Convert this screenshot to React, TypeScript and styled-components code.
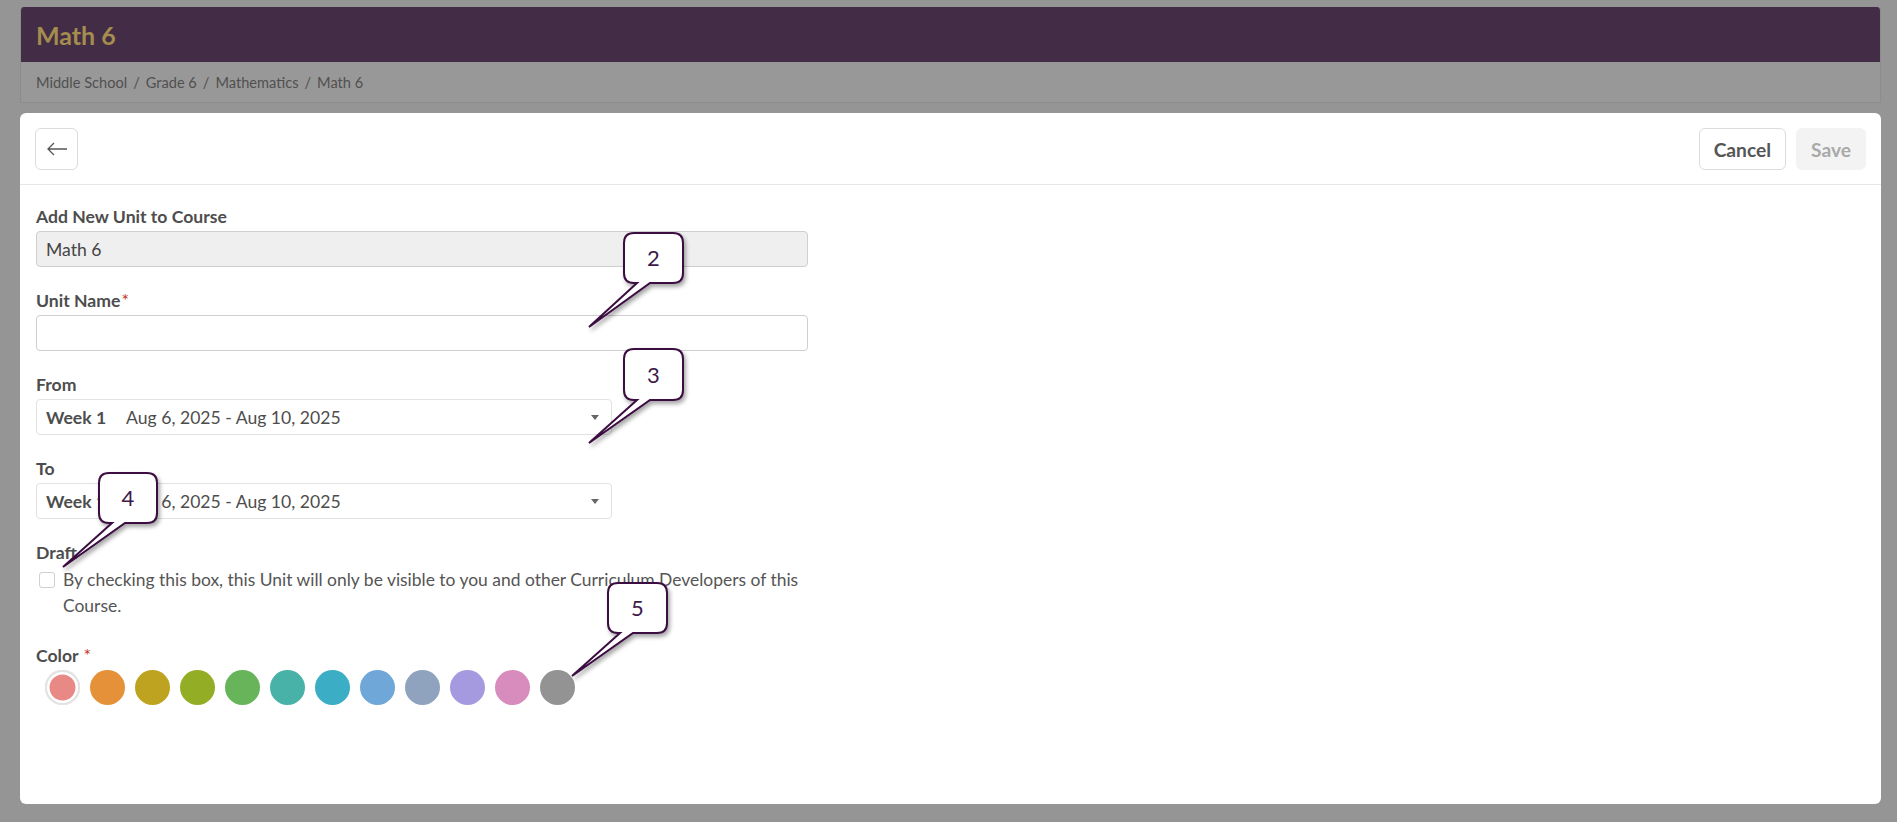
import React from 'react';
import styled, { createGlobalStyle } from 'styled-components';

const GlobalStyle = createGlobalStyle`
  html, body {
    margin: 0;
    padding: 0;
    background: #959595;
    font-family: Lato, 'Open Sans', sans-serif;
  }
  * {
    box-sizing: border-box;
  }
`;

const Page = styled.div`
  position: relative;
  padding: 7px 16px 18px 20px;
  display: flex;
  flex-direction: column;
  gap: 10px;
`;

const CourseHeader = styled.header`
  border-radius: 4px 4px 2px 2px;
  overflow: hidden;
  border: 1px solid #8c8c8c;
  border-top: none;
`;

const TitleBar = styled.div`
  height: 55px;
  background: #432c45;
  display: flex;
  align-items: center;
  padding: 0 15px;
`;

const Title = styled.h1`
  margin: 0;
  font-size: 25px;
  font-weight: 700;
  color: #a48d4e;
`;

const Breadcrumbs = styled.nav`
  height: 40px;
  background: #989898;
  display: flex;
  align-items: center;
  padding: 0 15px;
  font-size: 14.6px;
  color: #505050;
  gap: 6px;
`;

const Card = styled.main`
  background: #fff;
  border-radius: 6px;
  height: 691px;
  display: flex;
  flex-direction: column;
`;

const Toolbar = styled.div`
  display: flex;
  align-items: center;
  justify-content: space-between;
  padding: 15px 15px 14px 15px;
  border-bottom: 1px solid #e6e6e6;
`;

const Actions = styled.div`
  display: flex;
  gap: 10px;
`;

const Button = styled.button<{ $disabled?: boolean }>`
  height: 42px;
  padding: 0 14px;
  border-radius: 6px;
  border: 1px solid ${({ $disabled }) => ($disabled ? '#f3f3f3' : '#dcdcdc')};
  background: ${({ $disabled }) => ($disabled ? '#f3f3f3' : '#fff')};
  color: ${({ $disabled }) => ($disabled ? '#a9a9a9' : '#555')};
  font-family: Lato, sans-serif;
  font-size: 19.2px;
  font-weight: 700;
  display: flex;
  align-items: center;
  justify-content: center;
`;

const IconButton = styled(Button)`
  width: 43px;
  padding: 0;
`;

const Form = styled.form`
  padding: 21px 16px 0 16px;
  display: flex;
  flex-direction: column;
  gap: 23px;
`;

const Field = styled.div<{ $width: number }>`
  display: flex;
  flex-direction: column;
  gap: 4px;
  width: ${({ $width }) => $width}px;
`;

const Label = styled.label`
  font-size: 17.6px;
  font-weight: 700;
  color: #4d4d4d;
  line-height: 21px;
`;

const Required = styled.span`
  color: #c0392b;
  font-weight: 400;
  margin-left: 1px;
`;

const TextInput = styled.div<{ $readOnly?: boolean }>`
  height: 36px;
  border: 1px solid #cfcfcf;
  border-radius: 4px;
  background: ${({ $readOnly }) => ($readOnly ? '#efefef' : '#fff')};
  display: flex;
  align-items: center;
  padding: 0 9px;
  font-size: 17.6px;
  color: #454545;
`;

const Select = styled.div`
  height: 36px;
  border: 1px solid #e2e2e2;
  border-radius: 4px;
  display: flex;
  align-items: center;
  padding: 0 12px 0 9px;
  font-size: 17.6px;
  color: #4d4d4d;
`;

const WeekName = styled.span`
  font-weight: 700;
  margin-right: 20px;
`;

const Caret = styled.span`
  margin-left: auto;
  width: 0;
  height: 0;
  border-left: 4.5px solid transparent;
  border-right: 4.5px solid transparent;
  border-top: 5px solid #666;
`;

const CheckRow = styled.div`
  display: flex;
  align-items: flex-start;
  gap: 8px;
  padding: 0 0 3px 3px;
`;

const Checkbox = styled.span`
  flex: none;
  width: 16px;
  height: 16px;
  margin-top: 5px;
  border: 1px solid #d0d0d0;
  border-radius: 3px;
  background: #fff;
`;

const CheckText = styled.span`
  font-size: 17.45px;
  line-height: 26px;
  color: #555;
`;

const Swatches = styled.div`
  display: flex;
  gap: 10px;
  padding-left: 9px;
`;

const Swatch = styled.span<{ $color: string; $selected?: boolean }>`
  width: 35px;
  height: 35px;
  border-radius: 50%;
  background: ${({ $color }) => $color};
  box-shadow: ${({ $selected }) =>
    $selected ? 'inset 0 0 0 2px #e2e2e2, inset 0 0 0 4.5px #fff' : 'none'};
`;

const CalloutLayer = styled.svg`
  position: absolute;
  left: 0;
  top: 0;
  pointer-events: none;
  overflow: visible;
`;

const swatches = [
  '#e98985',
  '#e5913a',
  '#bda31f',
  '#93ad24',
  '#67b45a',
  '#49b2a8',
  '#3badc4',
  '#6fa7d8',
  '#8fa3bf',
  '#a59ae0',
  '#d88bbd',
  '#939393',
];

interface CalloutProps {
  n: number;
  x0: number;
  y0: number;
  x1: number;
  y1: number;
  b1: number;
  b2: number;
  tx: number;
  ty: number;
}

// numbered speech-bubble annotation drawn over the form
const Callout: React.FC<CalloutProps> = ({ n, x0, y0, x1, y1, b1, b2, tx, ty }) => {
  const r = 10;
  const d = `M${x0 + r},${y0} H${x1 - r} Q${x1},${y0} ${x1},${y0 + r} V${y1 - r} Q${x1},${y1} ${x1 - r},${y1} H${b2} L${tx},${ty} L${b1},${y1} H${x0 + r} Q${x0},${y1} ${x0},${y1 - r} V${y0 + r} Q${x0},${y0} ${x0 + r},${y0} Z`;
  return (
    <g>
      <path d={d} fill="#fff" stroke="#3a0b3f" strokeWidth={2} filter="url(#cshadow)" />
      <text
        x={(x0 + x1) / 2}
        y={(y0 + y1) / 2 + 8}
        textAnchor="middle"
        fontFamily="Lato, sans-serif"
        fontSize={22}
        fill="#3d1a4a"
      >
        {n}
      </text>
    </g>
  );
};

const App: React.FC = () => {
  return (
    <>
      <GlobalStyle />
      <Page>
        <CourseHeader>
          <TitleBar>
            <Title>Math 6</Title>
          </TitleBar>
          <Breadcrumbs>
            <span>Middle School</span>
            <span>/</span>
            <span>Grade 6</span>
            <span>/</span>
            <span>Mathematics</span>
            <span>/</span>
            <span>Math 6</span>
          </Breadcrumbs>
        </CourseHeader>

        <Card>
          <Toolbar>
            <IconButton type="button" aria-label="Back">
              <svg width="22" height="14" viewBox="0 0 22 14" fill="none">
                <path d="M21 7H2M8 1L2 7l6 6" stroke="#555" strokeWidth="1.3" />
              </svg>
            </IconButton>
            <Actions>
              <Button type="button">Cancel</Button>
              <Button type="button" $disabled>
                Save
              </Button>
            </Actions>
          </Toolbar>

          <Form>
            <Field $width={772}>
              <Label>Add New Unit to Course</Label>
              <TextInput $readOnly>Math 6</TextInput>
            </Field>
            <Field $width={772}>
              <Label>
                Unit Name<Required>*</Required>
              </Label>
              <TextInput />
            </Field>
            <Field $width={576}>
              <Label>From</Label>
              <Select>
                <WeekName>Week 1</WeekName>
                Aug 6, 2025 - Aug 10, 2025
                <Caret />
              </Select>
            </Field>
            <Field $width={576}>
              <Label>To</Label>
              <Select>
                <WeekName>Week 1</WeekName>
                Aug 6, 2025 - Aug 10, 2025
                <Caret />
              </Select>
            </Field>
            <Field $width={772}>
              <Label>Draft</Label>
              <CheckRow>
                <Checkbox />
                <CheckText>
                  By checking this box, this Unit will only be visible to you and other
                  Curriculum Developers of this Course.
                </CheckText>
              </CheckRow>
            </Field>
            <Field $width={772}>
              <Label>
                Color <Required>*</Required>
              </Label>
              <Swatches>
                {swatches.map((c, i) => (
                  <Swatch key={c} $color={c} $selected={i === 0} />
                ))}
              </Swatches>
            </Field>
          </Form>
        </Card>

        <CalloutLayer width={1897} height={822}>
          <defs>
            <filter id="cshadow" x="-30%" y="-30%" width="160%" height="160%">
              <feDropShadow dx="2" dy="3" stdDeviation="2" floodColor="#000" floodOpacity="0.35" />
            </filter>
          </defs>
          <Callout n={2} x0={624} y0={233} x1={683} y1={283} b1={637} b2={650} tx={589} ty={327} />
          <Callout n={3} x0={624} y0={349} x1={683} y1={400} b1={637} b2={650} tx={589} ty={443} />
          <Callout n={4} x0={99} y0={473} x1={157} y1={523} b1={112} b2={125} tx={63} ty={567} />
          <Callout n={5} x0={608} y0={583} x1={667} y1={633} b1={620} b2={633} tx={572} ty={676} />
        </CalloutLayer>
      </Page>
    </>
  );
};

export default App;
